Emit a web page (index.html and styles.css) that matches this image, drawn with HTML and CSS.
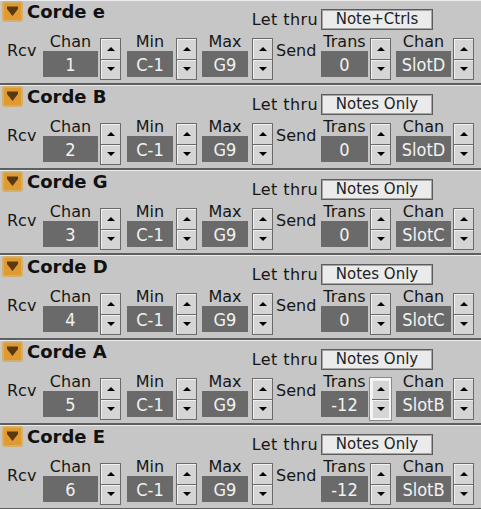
FILE: index.html
```html
<!DOCTYPE html>
<html>
<head>
<meta charset="utf-8">
<link rel="stylesheet" href="styles.css">
</head>
<body>
<div class="stack">

<div class="panel">
  <div class="head">
    <span class="fold"><svg width="21" height="21" viewBox="0 0 21 21"><rect x="1" y="1" width="19" height="19" rx="2" fill="#e09a32" stroke="#d2b06c" stroke-width="2"/><path d="M5 5.5h11v2.5l-5.5 7L5 8z" fill="#5a3810"/></svg></span>
    <span class="title">Corde e</span>
    <div class="thru"><span class="thru-label">Let thru</span><span class="thru-box">Note+Ctrls</span></div>
  </div>
  <div class="ctrls">
    <span class="side rcv">Rcv</span>
    <div class="field wide"><span class="lbl">Chan</span><span class="val">1</span></div>
    <div class="spin s1"><span class="btn"><i class="up"></i></span><span class="btn"><i class="dn"></i></span></div>
    <div class="field narrow f-min"><span class="lbl">Min</span><span class="val">C-1</span></div>
    <div class="spin s2"><span class="btn"><i class="up"></i></span><span class="btn"><i class="dn"></i></span></div>
    <div class="field narrow f-max"><span class="lbl">Max</span><span class="val">G9</span></div>
    <div class="spin s3"><span class="btn"><i class="up"></i></span><span class="btn"><i class="dn"></i></span></div>
    <span class="side send">Send</span>
    <div class="field trans"><span class="lbl">Trans</span><span class="val">0</span></div>
    <div class="spin s4"><span class="btn"><i class="up"></i></span><span class="btn"><i class="dn"></i></span></div>
    <div class="field wide f-out"><span class="lbl">Chan</span><span class="val">SlotD</span></div>
    <div class="spin s5"><span class="btn"><i class="up"></i></span><span class="btn"><i class="dn"></i></span></div>
  </div>
</div>

<div class="panel">
  <div class="head">
    <span class="fold"><svg width="21" height="21" viewBox="0 0 21 21"><rect x="1" y="1" width="19" height="19" rx="2" fill="#e09a32" stroke="#d2b06c" stroke-width="2"/><path d="M5 5.5h11v2.5l-5.5 7L5 8z" fill="#5a3810"/></svg></span>
    <span class="title">Corde B</span>
    <div class="thru"><span class="thru-label">Let thru</span><span class="thru-box">Notes Only</span></div>
  </div>
  <div class="ctrls">
    <span class="side rcv">Rcv</span>
    <div class="field wide"><span class="lbl">Chan</span><span class="val">2</span></div>
    <div class="spin s1"><span class="btn"><i class="up"></i></span><span class="btn"><i class="dn"></i></span></div>
    <div class="field narrow f-min"><span class="lbl">Min</span><span class="val">C-1</span></div>
    <div class="spin s2"><span class="btn"><i class="up"></i></span><span class="btn"><i class="dn"></i></span></div>
    <div class="field narrow f-max"><span class="lbl">Max</span><span class="val">G9</span></div>
    <div class="spin s3"><span class="btn"><i class="up"></i></span><span class="btn"><i class="dn"></i></span></div>
    <span class="side send">Send</span>
    <div class="field trans"><span class="lbl">Trans</span><span class="val">0</span></div>
    <div class="spin s4"><span class="btn"><i class="up"></i></span><span class="btn"><i class="dn"></i></span></div>
    <div class="field wide f-out"><span class="lbl">Chan</span><span class="val">SlotD</span></div>
    <div class="spin s5"><span class="btn"><i class="up"></i></span><span class="btn"><i class="dn"></i></span></div>
  </div>
</div>

<div class="panel">
  <div class="head">
    <span class="fold"><svg width="21" height="21" viewBox="0 0 21 21"><rect x="1" y="1" width="19" height="19" rx="2" fill="#e09a32" stroke="#d2b06c" stroke-width="2"/><path d="M5 5.5h11v2.5l-5.5 7L5 8z" fill="#5a3810"/></svg></span>
    <span class="title">Corde G</span>
    <div class="thru"><span class="thru-label">Let thru</span><span class="thru-box">Notes Only</span></div>
  </div>
  <div class="ctrls">
    <span class="side rcv">Rcv</span>
    <div class="field wide"><span class="lbl">Chan</span><span class="val">3</span></div>
    <div class="spin s1"><span class="btn"><i class="up"></i></span><span class="btn"><i class="dn"></i></span></div>
    <div class="field narrow f-min"><span class="lbl">Min</span><span class="val">C-1</span></div>
    <div class="spin s2"><span class="btn"><i class="up"></i></span><span class="btn"><i class="dn"></i></span></div>
    <div class="field narrow f-max"><span class="lbl">Max</span><span class="val">G9</span></div>
    <div class="spin s3"><span class="btn"><i class="up"></i></span><span class="btn"><i class="dn"></i></span></div>
    <span class="side send">Send</span>
    <div class="field trans"><span class="lbl">Trans</span><span class="val">0</span></div>
    <div class="spin s4"><span class="btn"><i class="up"></i></span><span class="btn"><i class="dn"></i></span></div>
    <div class="field wide f-out"><span class="lbl">Chan</span><span class="val">SlotC</span></div>
    <div class="spin s5"><span class="btn"><i class="up"></i></span><span class="btn"><i class="dn"></i></span></div>
  </div>
</div>

<div class="panel">
  <div class="head">
    <span class="fold"><svg width="21" height="21" viewBox="0 0 21 21"><rect x="1" y="1" width="19" height="19" rx="2" fill="#e09a32" stroke="#d2b06c" stroke-width="2"/><path d="M5 5.5h11v2.5l-5.5 7L5 8z" fill="#5a3810"/></svg></span>
    <span class="title">Corde D</span>
    <div class="thru"><span class="thru-label">Let thru</span><span class="thru-box">Notes Only</span></div>
  </div>
  <div class="ctrls">
    <span class="side rcv">Rcv</span>
    <div class="field wide"><span class="lbl">Chan</span><span class="val">4</span></div>
    <div class="spin s1"><span class="btn"><i class="up"></i></span><span class="btn"><i class="dn"></i></span></div>
    <div class="field narrow f-min"><span class="lbl">Min</span><span class="val">C-1</span></div>
    <div class="spin s2"><span class="btn"><i class="up"></i></span><span class="btn"><i class="dn"></i></span></div>
    <div class="field narrow f-max"><span class="lbl">Max</span><span class="val">G9</span></div>
    <div class="spin s3"><span class="btn"><i class="up"></i></span><span class="btn"><i class="dn"></i></span></div>
    <span class="side send">Send</span>
    <div class="field trans"><span class="lbl">Trans</span><span class="val">0</span></div>
    <div class="spin s4"><span class="btn"><i class="up"></i></span><span class="btn"><i class="dn"></i></span></div>
    <div class="field wide f-out"><span class="lbl">Chan</span><span class="val">SlotC</span></div>
    <div class="spin s5"><span class="btn"><i class="up"></i></span><span class="btn"><i class="dn"></i></span></div>
  </div>
</div>

<div class="panel">
  <div class="head">
    <span class="fold"><svg width="21" height="21" viewBox="0 0 21 21"><rect x="1" y="1" width="19" height="19" rx="2" fill="#e09a32" stroke="#d2b06c" stroke-width="2"/><path d="M5 5.5h11v2.5l-5.5 7L5 8z" fill="#5a3810"/></svg></span>
    <span class="title">Corde A</span>
    <div class="thru"><span class="thru-label">Let thru</span><span class="thru-box">Notes Only</span></div>
  </div>
  <div class="ctrls">
    <span class="side rcv">Rcv</span>
    <div class="field wide"><span class="lbl">Chan</span><span class="val">5</span></div>
    <div class="spin s1"><span class="btn"><i class="up"></i></span><span class="btn"><i class="dn"></i></span></div>
    <div class="field narrow f-min"><span class="lbl">Min</span><span class="val">C-1</span></div>
    <div class="spin s2"><span class="btn"><i class="up"></i></span><span class="btn"><i class="dn"></i></span></div>
    <div class="field narrow f-max"><span class="lbl">Max</span><span class="val">G9</span></div>
    <div class="spin s3"><span class="btn"><i class="up"></i></span><span class="btn"><i class="dn"></i></span></div>
    <span class="side send">Send</span>
    <div class="field trans"><span class="lbl">Trans</span><span class="val">-12</span></div>
    <div class="spin s4 focus"><span class="btn"><i class="up"></i></span><span class="btn"><i class="dn"></i></span></div>
    <div class="field wide f-out"><span class="lbl">Chan</span><span class="val">SlotB</span></div>
    <div class="spin s5"><span class="btn"><i class="up"></i></span><span class="btn"><i class="dn"></i></span></div>
  </div>
</div>

<div class="panel">
  <div class="head">
    <span class="fold"><svg width="21" height="21" viewBox="0 0 21 21"><rect x="1" y="1" width="19" height="19" rx="2" fill="#e09a32" stroke="#d2b06c" stroke-width="2"/><path d="M5 5.5h11v2.5l-5.5 7L5 8z" fill="#5a3810"/></svg></span>
    <span class="title">Corde E</span>
    <div class="thru"><span class="thru-label">Let thru</span><span class="thru-box">Notes Only</span></div>
  </div>
  <div class="ctrls">
    <span class="side rcv">Rcv</span>
    <div class="field wide"><span class="lbl">Chan</span><span class="val">6</span></div>
    <div class="spin s1"><span class="btn"><i class="up"></i></span><span class="btn"><i class="dn"></i></span></div>
    <div class="field narrow f-min"><span class="lbl">Min</span><span class="val">C-1</span></div>
    <div class="spin s2"><span class="btn"><i class="up"></i></span><span class="btn"><i class="dn"></i></span></div>
    <div class="field narrow f-max"><span class="lbl">Max</span><span class="val">G9</span></div>
    <div class="spin s3"><span class="btn"><i class="up"></i></span><span class="btn"><i class="dn"></i></span></div>
    <span class="side send">Send</span>
    <div class="field trans"><span class="lbl">Trans</span><span class="val">-12</span></div>
    <div class="spin s4"><span class="btn"><i class="up"></i></span><span class="btn"><i class="dn"></i></span></div>
    <div class="field wide f-out"><span class="lbl">Chan</span><span class="val">SlotB</span></div>
    <div class="spin s5"><span class="btn"><i class="up"></i></span><span class="btn"><i class="dn"></i></span></div>
  </div>
</div>

</div>
</body>
</html>
```

FILE: styles.css
```css
html, body {
  margin: 0;
  padding: 0;
  background: #c6c6c6;
}
body {
  width: 481px;
  height: 509px;
  overflow: hidden;
  font-family: "DejaVu Sans", "Liberation Sans", sans-serif;
  color: #161616;
}
.stack {
  display: flex;
  flex-direction: column;
}
.panel {
  height: 82px;
  border-top: 1px solid #ececec;
  border-bottom: 2px solid #5e5e5e;
  background: #c6c6c6;
  display: flex;
  flex-direction: column;
}
.head {
  height: 33px;
  display: flex;
  align-items: flex-start;
}
.fold {
  display: block;
  width: 21px;
  height: 21px;
  margin-left: 2px;
}
.fold svg { display: block; }
.title {
  margin-left: 4px;
  font-size: 18px;
  font-weight: bold;
  line-height: 22px;
  color: #111;
}
.thru {
  margin-left: auto;
  margin-right: 48px;
  margin-top: 8px;
  display: flex;
  align-items: center;
}
.thru-label {
  font-size: 16px;
  line-height: 21px;
  letter-spacing: 0.4px;
  margin-right: 3px;
}
.thru-box {
  box-sizing: border-box;
  width: 112px;
  height: 21px;
  border: 1px solid #5c5c5c;
  box-shadow: inset 0 0 0 1px #a6a6a6;
  background: #ebebeb;
  font-size: 15px;
  line-height: 19px;
  text-align: center;
  color: #222;
}
.ctrls {
  height: 49px;
  display: flex;
  align-items: flex-start;
}
.side {
  font-size: 16px;
  line-height: 16px;
  margin-top: 9px;
  white-space: nowrap;
}
.rcv { margin-left: 7px; width: 36px; }
.send { margin-left: 3px; width: 45px; }
.field {
  display: flex;
  flex-direction: column;
  align-items: center;
}
.wide { width: 55px; }
.narrow { width: 46px; }
.trans { width: 47px; }
.f-min { margin-left: 6px; }
.f-max { margin-left: 5px; }
.f-out { margin-left: 5px; }
.lbl {
  font-size: 16px;
  line-height: 16px;
  white-space: nowrap;
}
.val {
  box-sizing: border-box;
  margin-top: 1px;
  width: 100%;
  height: 26px;
  background: #6a6a6a;
  color: #f2f2f2;
  font-family: "DejaVu Sans Condensed", "DejaVu Sans", sans-serif;
  font-stretch: condensed;
  font-size: 18px;
  line-height: 27px;
  text-align: center;
}
.spin {
  box-sizing: border-box;
  margin-top: 4px;
  width: 21px;
  height: 42px;
  border: 1px solid #6a6a6a;
  background: #6a6a6a;
  display: flex;
  flex-direction: column;
  gap: 1px;
}
.s1, .s4, .s5 { margin-left: 2px; }
.s2 { margin-left: 3px; }
.s3 { margin-left: 4px; }
.spin.focus {
  border: 2px solid #f6f6f6;
  box-shadow: 0 0 0 1px #8a8a8a;
}
.btn {
  flex: 1;
  background: #d5d5d5;
  box-shadow: inset 1px 1px 0 #f2f2f2;
  display: flex;
  align-items: center;
  justify-content: center;
}
.btn i {
  display: block;
  width: 0;
  height: 0;
  border-left: 4px solid transparent;
  border-right: 4px solid transparent;
}
.btn i.up { border-bottom: 4px solid #000; }
.btn i.dn { border-top: 4px solid #000; }
```
